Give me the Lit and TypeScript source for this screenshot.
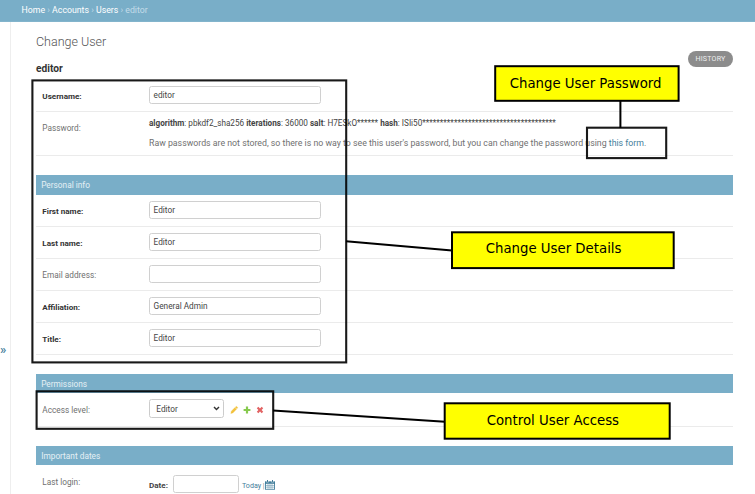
import { LitElement, html, svg, css, nothing } from "lit";
import { customElement } from "lit/decorators.js";
import { classMap } from "lit/directives/class-map.js";

interface Field {
  label: string;
  value: string;
  required: boolean;
}

interface Callout {
  x: number;
  y: number;
  w: number;
  h: number;
  tx: number;
  ty: number;
  text: string;
}

const personal: Field[] = [
  { label: "First name:", value: "Editor", required: true },
  { label: "Last name:", value: "Editor", required: true },
  { label: "Email address:", value: "", required: false },
  { label: "Affiliation:", value: "General Admin", required: true },
  { label: "Title:", value: "Editor", required: true },
];

const callouts: Callout[] = [
  { x: 495.2, y: 66.2, w: 183.4, h: 34.6, tx: 509.7, ty: 88, text: "Change User Password" },
  { x: 452, y: 232.3, w: 221.7, h: 35.8, tx: 485.7, ty: 253.4, text: "Change User Details" },
  { x: 444.7, y: 403.3, w: 225, h: 35.4, tx: 486.7, ty: 424.8, text: "Control User Access" },
];

@customElement("app-root")
export class AppRoot extends LitElement {
  static styles = css`
    :host {
      display: block;
      position: relative;
      width: 755px;
      height: 494px;
      overflow: hidden;
      background: #fff;
      color: #444;
      font: 8.25px/12px Roboto, sans-serif;
    }
    * { box-sizing: border-box; }
    .crumbs {
      height: 22px;
      padding-left: 21.6px;
      background: #79aec8;
      border-bottom: 1px solid #83b4cc;
      color: #c4dce8;
      font-size: 8.75px;
      line-height: 20px;
      white-space: pre;
    }
    .crumbs b { font-weight: 400; color: #fff; }
    .body { display: flex; height: 472px; }
    .rail {
      width: 11px;
      flex: none;
      border-right: 1px solid #eee;
      color: #447e9b;
      font-size: 13px;
      font-weight: 500;
      line-height: 16px;
      padding-top: 320px;
    }
    .content { width: 722px; flex: none; padding: 0 0 0 25px; }
    .top { display: flex; justify-content: space-between; height: 39px; }
    h1 { margin: 12px 0 0; font-size: 12.5px; font-weight: 300; line-height: 16px; color: #555; }
    .history {
      width: 45px;
      height: 16px;
      margin-top: 28.5px;
      flex: none;
      border-radius: 8px;
      background: #8c8c8c;
      color: #eee;
      font-size: 7.1px;
      letter-spacing: 0.2px;
      line-height: 16px;
      text-align: center;
    }
    h2 { margin: 0; font-size: 10.2px; font-weight: 700; line-height: 16px; height: 19px; color: #333; }
    .row { display: flex; height: 32px; padding-left: 6.3px; border-bottom: 1px solid #ebebeb; }
    .row.pass { height: 44px; }
    .row.access { height: 34px; }
    .row.login { border: 0; height: 29px; }
    .label { width: 106.7px; flex: none; padding-top: 10px; color: #707070; font-size: 8.25px; }
    .access .label, .login .label { padding-top: 11px; }
    .label.required { font-weight: 700; color: #333; font-size: 8.1px; }
    .input {
      width: 172px;
      height: 18px;
      margin-top: 6px;
      padding-left: 3.6px;
      border: 1px solid #d0d0d0;
      border-radius: 2.5px;
      background: #fff;
      line-height: 16px;
      font-size: 8.25px;
    }
    .bar {
      height: 20px;
      padding-left: 5.2px;
      background: #79aec8;
      color: #e5f0f5;
      font-size: 8.3px;
      line-height: 20px;
    }
    .bar.short { height: 19px; }
    .gap { height: 19px; }
    .hash { padding-top: 5px; font-size: 8.16px; white-space: pre; }
    .raw { color: #707070; font-size: 8.78px; padding-top: 7.5px; white-space: pre; }
    .raw span { color: #447e9b; }
    .select {
      display: flex;
      align-items: center;
      justify-content: space-between;
      width: 75px;
      height: 19px;
      margin-top: 6.3px;
      padding: 0 3px 0 6.3px;
      border: 1px solid #ccc;
      border-radius: 2.5px;
    }
    .tools { display: flex; gap: 4.8px; margin: 12.5px 0 0 6px; }
    .tools svg { width: 8px; height: 8px; overflow: visible; }
    .date { font-weight: 700; font-size: 8.1px; padding-top: 14px; width: 24px; }
    .datebox { width: 66px; margin-top: 10px; }
    .today { display: flex; padding: 14.5px 0 0 3px; color: #447e9b; font-size: 7.1px; white-space: pre; }
    .today i { font-style: normal; color: #888; }
    .cal { width: 10px; height: 10px; margin: 0 0 0 0.5px; }
    .notes { position: absolute; inset: 0; width: 755px; height: 494px; }
    .ink { fill: none; stroke: #000; stroke-width: 2; }
    .frame { fill: none; stroke: #000; stroke-width: 2.1; stroke-opacity: 0.9; }
    .box { fill: #ff0; stroke: #000; stroke-width: 2; }
    .note { font: 13.3px "DejaVu Sans", sans-serif; fill: #000; }
  `;

  private field(f: Field) {
    return html`<div class="row">
      <div class=${classMap({ label: true, required: f.required })}>${f.label}</div>
      <div class="input">${f.value || nothing}</div>
    </div>`;
  }

  private callout(c: Callout) {
    return svg`<rect class="box" x=${c.x} y=${c.y} width=${c.w} height=${c.h}></rect>
      <text class="note" x=${c.tx} y=${c.ty}>${c.text}</text>`;
  }

  render() {
    return html`
      <div class="crumbs"><b>Home</b> › <b>Accounts</b> › <b>Users</b> › editor</div>
      <div class="body">
        <div class="rail">»</div>
        <div class="content">
          <div class="top"><h1>Change User</h1><div class="history">HISTORY</div></div>
          <h2>editor</h2>
          ${this.field({ label: "Username:", value: "editor", required: true })}
          <div class="row pass">
            <div class="label">Password:</div>
            <div>
              <div class="hash"><b>algorithm</b>: pbkdf2_sha256 <b>iterations</b>: 36000 <b>salt</b>: H7ESkO****** <b>hash</b>: ISIi50**************************************</div>
              <div class="raw">Raw passwords are not stored, so there is no way to see this user's password, but you can change the password using <span>this form</span>.</div>
            </div>
          </div>
          <div class="gap"></div>
          <div class="bar">Personal info</div>
          ${personal.map((f) => this.field(f))}
          <div class="gap"></div>
          <div class="bar short">Permissions</div>
          <div class="row access">
            <div class="label">Access level:</div>
            <div class="select">Editor
              <svg width="7" height="5" viewBox="0 0 7 5"><path d="M1 1 3.5 3.6 6 1" fill="none" stroke="#333" stroke-width="1.4"/></svg>
            </div>
            <div class="tools">
              <svg viewBox="0 0 8 8"><path d="M.8 7.5 1.3 5.2 4.9 1.6 6.5 3.2 2.9 6.9ZM5.3 1.2 6 .6Q6.4.2 6.9.6L7.5 1.2Q7.9 1.6 7.5 2.1L6.9 2.8Z" fill="#f2c13c" stroke="#f2c13c" stroke-width=".3"/></svg>
              <svg viewBox="0 0 8 8"><path d="M2.9.6h2.2v2.3h2.3v2.2H5.1v2.3H2.9V5.1H.6V2.9h2.3Z" fill="#86c94d"/></svg>
              <svg viewBox="0 0 8 8"><path d="M.8 2.3 2.3.8 4 2.4 5.7.8 7.2 2.3 5.6 4 7.2 5.7 5.7 7.2 4 5.6 2.3 7.2.8 5.7 2.4 4Z" fill="#e26262"/></svg>
            </div>
          </div>
          <div class="gap"></div>
          <div class="bar short">Important dates</div>
          <div class="row login">
            <div class="label">Last login:</div>
            <div class="date">Date:</div>
            <div class="input datebox"></div>
            <div class="today">Today <i>|</i><svg class="cal" viewBox="0 0 10 10"><path d="M0 1.3h10v8.4H0Z" fill="#447e9b"/><path d="M.9 3.8h8.2v5.1H.9Z" fill="#fff"/><path d="M3 3.8v5.1M5 3.8v5.1M7 3.8v5.1M.9 5.5h8.2M.9 7.2h8.2" stroke="#6e9cb3" stroke-width=".6"/><path d="M2.5 0v2.6M7.5 0v2.6" stroke="#fff" stroke-width="1.8"/><path d="M2.5 0v2.4M7.5 0v2.4" stroke="#447e9b"/></svg></div>
          </div>
        </div>
      </div>
      <svg class="notes" viewBox="0 0 755 494">
        <rect class="frame" x="32.4" y="80.4" width="313.8" height="282"></rect>
        <rect class="frame" x="36.6" y="391.3" width="236.6" height="37.5"></rect>
        <rect class="frame" x="587" y="127.7" width="79.2" height="30.4"></rect>
        <path class="ink" d="M620.4 100V128M346 241.2 452 250.4M273 410.4 445 421.8"></path>
        ${callouts.map((c) => this.callout(c))}
      </svg>
    `;
  }
}
